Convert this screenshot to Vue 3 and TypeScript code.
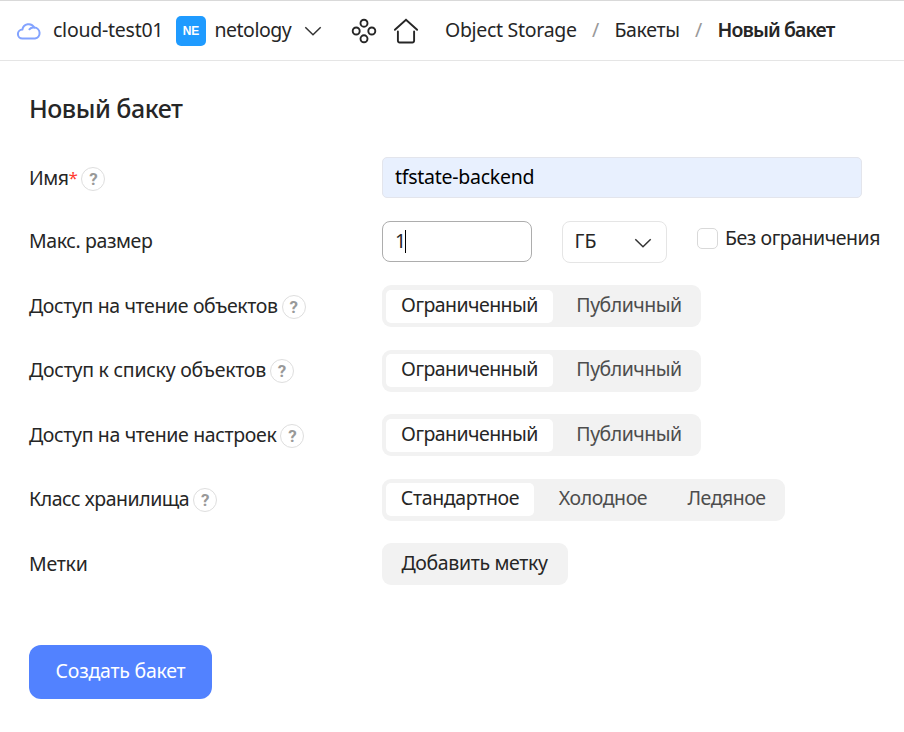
<script setup lang="ts">
import { ref } from 'vue'

interface Option {
  text: string
  width: number
  tracking: number
}

interface AccessRow {
  label: string
  tracking: number
  options: Option[]
}

const accessOptions: Option[] = [
  { text: 'Ограниченный', width: 167, tracking: -0.54 },
  { text: 'Публичный', width: 144, tracking: -0.5 },
]

const rows: AccessRow[] = [
  { label: 'Доступ на чтение объектов', tracking: -0.37, options: accessOptions },
  { label: 'Доступ к списку объектов', tracking: -0.25, options: accessOptions },
  { label: 'Доступ на чтение настроек', tracking: -0.35, options: accessOptions },
  {
    label: 'Класс хранилища',
    tracking: -0.47,
    options: [
      { text: 'Стандартное', width: 148, tracking: -0.33 },
      { text: 'Холодное', width: 130, tracking: -0.4 },
      { text: 'Ледяное', width: 117, tracking: -0.5 },
    ],
  },
]

const selected = ref<number[]>(rows.map(() => 0))
const bucketName = ref('tfstate-backend')
const maxSize = ref('1')
const unlimited = ref(false)
</script>

<template>
  <div class="page">
    <header class="topbar">
      <svg class="cloud" width="26" height="20" viewBox="0 0 26 20" fill="none">
        <path d="M6.400 17.600a4.500 4.500 0 0 1 0-9A6.400 6.400 0 0 1 18.300 6.500a5.600 5.600 0 0 1 .7 11.100Z" />
        <path d="M13.400 8.300a5 5 0 0 1 4.900-1.800" />
      </svg>
      <span class="cloud-name">cloud-test01</span>
      <span class="badge">NE</span>
      <span class="folder-name">netology</span>
      <svg class="chevron" width="18" height="10" viewBox="0 0 18 10" fill="none">
        <path d="M1.300 1.200 9 8.700l7.700-7.500" />
      </svg>
      <svg class="services" width="26" height="26" viewBox="0 0 26 26" fill="none">
        <circle cx="13" cy="5.200" r="3.500" />
        <circle cx="5.200" cy="13" r="3.500" />
        <circle cx="20.800" cy="13" r="3.500" />
        <circle cx="13" cy="20.800" r="3.500" />
      </svg>
      <svg class="home" width="26" height="26" viewBox="0 0 26 26" fill="none">
        <path d="M1.900 11.800 13 1.700 24.100 11.800" />
        <path d="M4.900 13.400V22.800a1.700 1.700 0 0 0 1.700 1.700H19.400a1.700 1.700 0 0 0 1.700-1.700V13.400" />
      </svg>
      <nav class="crumbs">
        <span class="crumb-service">Object Storage</span>
        <span class="slash">/</span>
        <span class="crumb-list">Бакеты</span>
        <span class="slash">/</span>
        <span class="crumb-current">Новый бакет</span>
      </nav>
    </header>

    <main class="content">
      <h1 class="title">Новый бакет</h1>
      <form class="form" @submit.prevent>
        <div class="row">
          <div class="label name">
            <span>Имя</span><span class="required">*</span>
            <span class="help">?</span>
          </div>
          <input v-model="bucketName" class="name-input" type="text" spellcheck="false" />
        </div>

        <div class="row">
          <div class="label size"><span>Макс. размер</span></div>
          <div class="size-input"><span>{{ maxSize }}</span><i class="caret"></i></div>
          <div class="select">
            <span>ГБ</span>
            <svg class="chevron" width="18" height="10" viewBox="0 0 18 10" fill="none">
              <path d="M1.300 1.200 9 8.700l7.700-7.500" />
            </svg>
          </div>
          <label class="check">
            <input v-model="unlimited" type="checkbox" />
            <span>Без ограничения</span>
          </label>
        </div>

        <div v-for="(row, r) in rows" :key="row.label" class="row">
          <div class="label">
            <span :style="{ letterSpacing: row.tracking + 'px' }">{{ row.label }}</span>
            <span class="help">?</span>
          </div>
          <div class="segmented">
            <button
              v-for="(option, i) in row.options"
              :key="option.text"
              type="button"
              class="segment"
              :class="{ active: selected[r] === i }"
              :style="{ width: option.width + 'px', letterSpacing: option.tracking + 'px' }"
              @click="selected[r] = i"
            >
              {{ option.text }}
            </button>
          </div>
        </div>

        <div class="row">
          <div class="label tags"><span>Метки</span></div>
          <button type="button" class="add">Добавить метку</button>
        </div>

        <button type="submit" class="submit">Создать бакет</button>
      </form>
    </main>
  </div>
</template>

<style>
body {
  margin: 0;
  background: #fff;
}
</style>

<style scoped>
.page {
  box-sizing: border-box;
  width: 904px;
  height: 732px;
  overflow: hidden;
  color: #262626;
  font: 19.5px/26px 'Noto Sans', 'Open Sans', sans-serif;
  white-space: nowrap;
}
.page *,
.page *::before {
  box-sizing: border-box;
}
button,
input {
  margin: 0;
  border: 0;
  font: inherit;
  color: inherit;
}
svg {
  display: block;
  flex: none;
}
.topbar {
  display: flex;
  align-items: center;
  height: 61px;
  padding-left: 16px;
  border-top: 1px solid #d9d9d9;
  border-bottom: 1px solid #e5e5e5;
}
.cloud path {
  stroke: #83a3ff;
  stroke-width: 2;
  stroke-linecap: round;
  stroke-linejoin: round;
}
.cloud-name {
  width: 123px;
  margin-left: 11px;
  padding-bottom: 2px;
  letter-spacing: -0.25px;
}
.badge {
  width: 30px;
  height: 30px;
  border-radius: 5px;
  background: #1f9bff;
  color: #fff;
  font: 700 12px/31px 'Liberation Sans', sans-serif;
  text-align: center;
}
.folder-name {
  width: 90px;
  margin-left: 8.500px;
  padding-bottom: 2px;
  letter-spacing: -0.5px;
}
.chevron path {
  stroke: #333;
  stroke-width: 1.500;
}
.topbar .chevron {
  margin-left: -0.500px;
}
.services {
  margin-left: 29px;
}
.services circle {
  stroke: #262626;
  stroke-width: 1.900;
}
.home {
  margin-left: 15.500px;
}
.home path {
  stroke: #262626;
  stroke-width: 1.900;
  stroke-linecap: round;
}
.crumbs {
  display: flex;
  margin-left: 26.500px;
  padding-bottom: 2px;
}
.crumb-service {
  width: 147px;
  letter-spacing: -0.3px;
}
.slash {
  width: 22.500px;
  color: #999;
}
.crumb-list {
  width: 80.500px;
  letter-spacing: -0.35px;
}
.crumb-current {
  font-weight: 600;
  letter-spacing: -0.9px;
}
.content {
  padding: 29px 0 0 29px;
}
.title {
  height: 66.600px;
  margin: 0;
  font-size: 25px;
  line-height: 36px;
  font-weight: 500;
  letter-spacing: -0.48px;
}
.form {
  display: flex;
  flex-direction: column;
  align-items: flex-start;
  gap: 22.400px;
}
.row {
  display: flex;
  height: 42px;
}
.label {
  display: flex;
  align-items: center;
  width: 353px;
  height: 41px;
}
.name {
  height: 42px;
  letter-spacing: -0.5px;
}
.size {
  height: 40px;
  letter-spacing: -0.4px;
}
.tags {
  height: 42px;
  letter-spacing: -0.25px;
}
.required {
  color: #ff3b30;
  font-size: 17px;
}
.help {
  width: 24px;
  height: 24px;
  margin: 2px 0 0 4px;
  border: 1.500px solid #dedede;
  border-radius: 50%;
  color: #999;
  font: 700 17px/22px Roboto, 'Liberation Sans', sans-serif;
  letter-spacing: 0;
  text-align: center;
}
.name-input {
  width: 480px;
  height: 41px;
  padding: 0 12px 2px;
  border: 1px solid #e3e5ec;
  border-radius: 5px;
  background: #e8f0fe;
  color: #000;
  letter-spacing: -0.26px;
  outline: none;
}
.size-input {
  display: flex;
  align-items: center;
  width: 150px;
  height: 41px;
  padding-left: 12px;
  border: 1px solid #adadad;
  border-radius: 8px;
}
.size-input span {
  letter-spacing: -1.500px;
}
.caret {
  width: 1px;
  height: 23px;
  background: #000;
}
.select {
  display: flex;
  align-items: center;
  justify-content: space-between;
  width: 105px;
  height: 42px;
  margin-left: 30px;
  padding: 0 14px 0 11.500px;
  border: 1px solid #e5e5e5;
  border-radius: 8px;
}
.select span {
  margin-top: -2px;
}
.select .chevron {
  margin-top: 2px;
}
.check {
  display: flex;
  align-items: center;
  height: 35px;
  margin-left: 30px;
  letter-spacing: -0.45px;
}
.check input {
  appearance: none;
  width: 21px;
  height: 21px;
  margin-right: 7px;
  border: 1px solid #d9d9d9;
  border-radius: 5px;
  background: #fff;
}
.segmented {
  display: flex;
  align-items: center;
  height: 42px;
  padding: 0 4px;
  border-radius: 9px;
  background: #f2f2f2;
}
.segment {
  height: 33px;
  padding: 0 0 3px 8px;
  border-radius: 5px;
  background: transparent;
  color: #4d4d4d;
  line-height: 28px;
}
.segment.active {
  padding: 0 0 3px;
  background: #fff;
  color: #262626;
}
.add {
  width: 186px;
  height: 42px;
  padding: 0 1px 2px 0;
  border-radius: 9px;
  background: #f2f2f2;
  letter-spacing: -0.36px;
}
.submit {
  width: 183px;
  height: 54px;
  margin-top: 37.600px;
  padding: 0 0 2px;
  border-radius: 12px;
  background: #5282ff;
  color: #fff;
  letter-spacing: -0.24px;
}
</style>
